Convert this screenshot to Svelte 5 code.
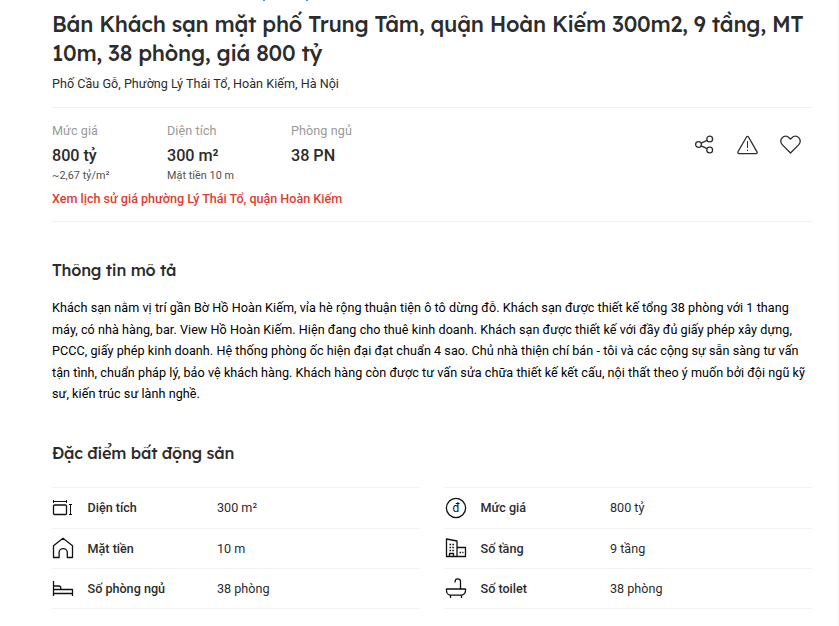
<!-- src/routes/ListingDetail.svelte -->
<script>
  const titleLines = [
    'Bán Khách sạn mặt phố Trung Tâm, quận Hoàn Kiếm 300m2, 9 tầng, MT',
    '10m, 38 phòng, giá 800 tỷ'
  ];

  const summary = [
    { label: 'Mức giá', value: '800 tỷ', note: '~2,67 tỷ/m²' },
    { label: 'Diện tích', value: '300 m²', note: 'Mặt tiền 10 m' },
    { label: 'Phòng ngủ', value: '38 PN', note: '' }
  ];

  const description = [
    'Khách sạn nằm vị trí gần Bờ Hồ Hoàn Kiếm, vỉa hè rộng thuận tiện ô tô dừng đỗ. Khách sạn được thiết kế tổng 38 phòng với 1 thang',
    'máy, có nhà hàng, bar. View Hồ Hoàn Kiếm. Hiện đang cho thuê kinh doanh. Khách sạn được thiết kế với đầy đủ giấy phép xây dựng,',
    'PCCC, giấy phép kinh doanh. Hệ thống phòng ốc hiện đại đạt chuẩn 4 sao. Chủ nhà thiện chí bán - tôi và các cộng sự sẵn sàng tư vấn',
    'tận tình, chuẩn pháp lý, bảo vệ khách hàng. Khách hàng còn được tư vấn sửa chữa thiết kế kết cấu, nội thất theo ý muốn bởi đội ngũ kỹ',
    'sư, kiến trúc sư lành nghề.'
  ];

  const specs = [
    [
      { icon: 'area', label: 'Diện tích', value: '300 m²' },
      { icon: 'house', label: 'Mặt tiền', value: '10 m' },
      { icon: 'bed', label: 'Số phòng ngủ', value: '38 phòng' }
    ],
    [
      { icon: 'price', label: 'Mức giá', value: '800 tỷ' },
      { icon: 'floors', label: 'Số tầng', value: '9 tầng' },
      { icon: 'bath', label: 'Số toilet', value: '38 phòng' }
    ]
  ];
</script>

<main class="listing">
  <div class="breadcrumb-edge"><i></i><i></i></div>
  <h1 class="title">
    {#each titleLines as line}
      <span>{line}</span>
    {/each}
  </h1>
  <p class="address">Phố Cầu Gỗ, Phường Lý Thái Tổ, Hoàn Kiếm, Hà Nội</p>

  <section class="summary">
    <div class="summary-row">
      {#each summary as item}
        <div class="summary-item">
          <span class="summary-label">{item.label}</span>
          <span class="summary-value">{item.value}</span>
          <span class="summary-note">{item.note}</span>
        </div>
      {/each}
      <div class="actions">
        <button aria-label="Chia sẻ">
          <svg viewBox="0 0 22 22">
            <circle cx="4.5" cy="10.5" r="2.9" />
            <circle cx="15.7" cy="5" r="2.9" />
            <circle cx="15.7" cy="16" r="2.9" />
            <path d="M7.2 9.2l5.8-2.8M7.2 11.8l5.8 2.8" />
          </svg>
        </button>
        <button aria-label="Báo cáo">
          <svg viewBox="0 0 22 22">
            <path d="M9.5 3 1 17.8a1.200 1.200 0 0 0 1 1.800h17a1.200 1.200 0 0 0 1-1.800L11.5 3a1.150 1.150 0 0 0-2 0z" />
            <path class="thin" d="M10.5 7v7M10.5 15.700v1.300" />
          </svg>
        </button>
        <button aria-label="Lưu tin">
          <svg viewBox="0 0 22 22">
            <path d="M10.5 19 2.2 10.600a4.900 4.900 0 0 1 0-6.900 4.700 4.700 0 0 1 6.900 0l1.400 1.400 1.400-1.400a4.700 4.700 0 0 1 6.900 0 4.900 4.900 0 0 1 0 6.900z" />
          </svg>
        </button>
      </div>
    </div>
    <a class="history" href="#history">Xem lịch sử giá phường Lý Thái Tổ, quận Hoàn Kiếm</a>
  </section>

  <h2>Thông tin mô tả</h2>
  <p class="description">
    {#each description as line}
      <span>{line}</span>
    {/each}
  </p>

  <h2 class="specs-title">Đặc điểm bất động sản</h2>
  <div class="specs">
    {#each specs as column}
      <div class="specs-column">
        {#each column as spec}
          <div class="spec">
            <svg class="spec-icon" viewBox="0 0 22 22">
              {#if spec.icon === 'area'}
                <path class="thin" d="M1.5 4.5h13M1.5 3v3M14.5 3v3M17 7.5h3M17 17.5h3M18.5 7.5v10" />
                <rect x="1.500" y="8" width="13" height="9.500" rx="1" />
              {:else if spec.icon === 'house'}
                <path d="M1.5 20.500V8.700L11 1.300l9.500 7.400v11.800h-5.200v-4.800a4.100 4.100 0 0 0-8.200 0v4.800z" />
              {:else if spec.icon === 'bed'}
                <path d="M1.5 4v15M1.5 16.500h19M20.500 19v-6.500h-19M1.5 9h5.300a2 2 0 0 1 2 2v1.500" />
              {:else if spec.icon === 'price'}
                <circle cx="11" cy="11" r="9.600" />
                <text x="11" y="15">đ</text>
              {:else if spec.icon === 'floors'}
                <path d="M1.5 19.500V2l10.500 2v15.500zM12 10.500h8.500v9H12" />
                <path d="M4.500 19.500v-3h4v3" />
                <path class="dots" d="M4.500 7.500h5M4.500 10.500h5M4.500 13.500h5M14.500 15.500h4" />
              {:else}
                <path d="M1.5 12h19v1.700a4.500 4.500 0 0 1-4.500 4.500H6a4.500 4.500 0 0 1-4.500-4.500zM5.500 18.500V21M16.500 18.500V21M15.500 12V4.500a2.700 2.700 0 0 0-5.400 0v1" />
              {/if}
            </svg>
            <span class="spec-label">{spec.label}</span>
            <span class="spec-value">{spec.value}</span>
          </div>
        {/each}
      </div>
    {/each}
  </div>
</main>

<style>
  :global(body) {
    background: #fff;
    overflow: hidden;
  }

  .listing {
    box-sizing: border-box;
    width: 839px;
    height: 626px;
    padding: 0 26px 0 52px;
    border-right: 1px solid #f2f2f2;
    font-family: Roboto, 'Liberation Sans', sans-serif;
    font-size: 12.6px;
    color: #2c2c2c;
    overflow: hidden;
  }

  .breadcrumb-edge {
    display: flex;
    gap: 41px;
    height: 9px;
    padding-left: 211px;
  }

  .breadcrumb-edge i {
    width: 2px;
    height: 1px;
    background: #4a90c8;
  }

  .title {
    margin: 0;
    font-family: Lexend, Lato, sans-serif;
    font-size: 21.6px;
    font-weight: 500;
    letter-spacing: -0.25px;
    line-height: 29px;
  }

  .title span,
  .description span {
    display: block;
    white-space: nowrap;
  }

  .address {
    margin: 8px 0 14px;
    letter-spacing: 0.02px;
    line-height: 18px;
  }

  .summary {
    box-sizing: border-box;
    height: 115px;
    border-top: 1px solid #f2f2f2;
    border-bottom: 1px solid #f2f2f2;
    padding-top: 14px;
  }

  .summary-row {
    display: flex;
    height: 68px;
  }

  .summary-item {
    display: flex;
    flex-direction: column;
  }

  .summary-item:nth-child(1) {
    width: 115px;
  }

  .summary-item:nth-child(2) {
    width: 124px;
  }

  .summary-label {
    color: #999;
    letter-spacing: 0.08px;
    line-height: 18px;
  }

  .summary-value {
    margin-top: 3px;
    font-size: 16.2px;
    font-weight: 500;
    letter-spacing: -0.03px;
    line-height: 25px;
  }

  .summary-note {
    margin-top: 1px;
    color: #505050;
    font-size: 10.8px;
    letter-spacing: 0.06px;
    line-height: 14px;
  }

  .actions {
    display: flex;
    gap: 21px;
    margin: 12px 10px 0 auto;
  }

  .actions button {
    width: 22px;
    height: 22px;
    padding: 0;
    border: 0;
    background: none;
  }

  svg {
    display: block;
    width: 22px;
    height: 22px;
    fill: none;
    stroke: #2c2c2c;
    stroke-width: 1.3;
    stroke-linejoin: round;
  }

  .thin {
    stroke-width: 1;
  }

  .history {
    display: block;
    color: #e03c31;
    font-weight: 500;
    letter-spacing: -0.02px;
    line-height: 18px;
    text-decoration: none;
  }

  h2 {
    margin: 36px 0 0;
    font-family: Lexend, Lato, sans-serif;
    font-size: 16.2px;
    font-weight: 500;
    letter-spacing: -0.2px;
    line-height: 24px;
  }

  .description {
    margin: 15px 0 0;
    color: #000;
    letter-spacing: 0.052px;
    line-height: 21.6px;
  }

  .specs-title {
    margin-top: 36px;
  }

  .specs {
    display: flex;
    gap: 26px;
    margin-top: 22px;
  }

  .specs-column {
    width: 367px;
    border-top: 1px solid #f2f2f2;
  }

  .spec {
    display: flex;
    align-items: center;
    box-sizing: border-box;
    height: 40px;
    border-bottom: 1px solid #f2f2f2;
  }

  .spec:first-child {
    height: 41px;
  }

  .spec-icon {
    margin-right: 13.5px;
    stroke: #111;
  }

  .spec-icon text {
    fill: #111;
    stroke: none;
    font-size: 12px;
    text-anchor: middle;
  }

  .dots {
    stroke-width: 1.6;
    stroke-dasharray: 1.6 1.2;
  }

  .spec-label {
    width: 129.5px;
    font-weight: 500;
  }
</style>
